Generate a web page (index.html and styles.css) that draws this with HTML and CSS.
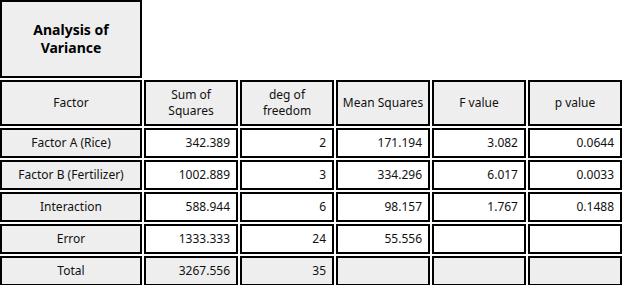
FILE: index.html
```html
<!DOCTYPE html>
<html>
<head>
<meta charset="utf-8">
<link rel="stylesheet" href="styles.css">
</head>
<body>
<table class="anova">
  <tr class="title-row">
    <th class="title">Analysis of<br>Variance</th>
  </tr>
  <tr class="head-row">
    <th class="c-factor">Factor</th>
    <th class="c-num">Sum of<br>Squares</th>
    <th class="c-num">deg of<br>freedom</th>
    <th class="c-num">Mean Squares</th>
    <th class="c-num">F value</th>
    <th class="c-num">p value</th>
  </tr>
  <tr class="data-row">
    <th class="label">Factor A (Rice)</th>
    <td>342.389</td><td>2</td><td>171.194</td><td>3.082</td><td>0.0644</td>
  </tr>
  <tr class="data-row">
    <th class="label">Factor B (Fertilizer)</th>
    <td>1002.889</td><td>3</td><td>334.296</td><td>6.017</td><td>0.0033</td>
  </tr>
  <tr class="data-row">
    <th class="label">Interaction</th>
    <td>588.944</td><td>6</td><td>98.157</td><td>1.767</td><td>0.1488</td>
  </tr>
  <tr class="data-row">
    <th class="label">Error</th>
    <td>1333.333</td><td>24</td><td>55.556</td><td></td><td></td>
  </tr>
  <tr class="data-row total">
    <th class="label">Total</th>
    <td>3267.556</td><td>35</td><td></td><td></td><td></td>
  </tr>
</table>
</body>
</html>
```

FILE: styles.css
```css
html, body {
  margin: 0;
  padding: 0;
  background: #fff;
}

body {
  font-family: "Noto Sans", "Noto Sans CJK KR", sans-serif;
  font-size: 12px;
  color: #111;
}

.anova {
  border-collapse: separate;
  border-spacing: 2px;
  margin: -2px 0 0 -2px;
}

.anova th,
.anova td {
  box-sizing: border-box;
  border: 2px solid #000;
  padding: 0 4px;
  vertical-align: middle;
  line-height: 16px;
}

.anova th {
  background: #eeeeee;
  font-weight: normal;
  text-align: center;
}

.anova td {
  background: #fff;
  text-align: right;
  padding-right: 6px;
}

.title-row .title {
  width: 142px;
  height: 78px;
  font-size: 14px;
  font-weight: bold;
  line-height: 18px;
  color: #000;
}

.head-row th {
  height: 46px;
}

.c-factor {
  width: 142px;
}

.c-num {
  width: 94px;
}

.data-row th,
.data-row td {
  height: 30px;
}

.total td {
  background: #eeeeee;
}
```
